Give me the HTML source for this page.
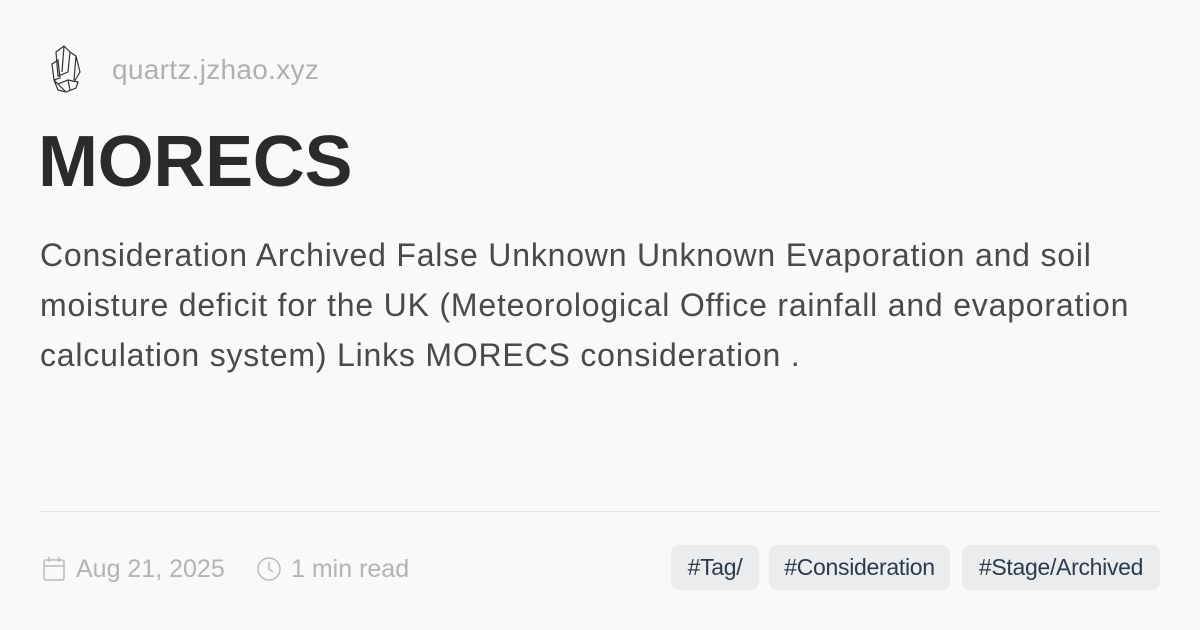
<!DOCTYPE html>
<html><head><style>
body{margin:0;width:1200px;height:630px;background:#faf8f8;font-family:"Liberation Sans",sans-serif;position:relative;overflow:hidden}
.abs{position:absolute;white-space:nowrap}
.site{left:112px;top:54px;font-size:28px;color:#b0b0b0;letter-spacing:0.3px}
h1{position:absolute;left:38px;top:121px;margin:0;font-size:72px;font-weight:bold;color:#2b2b2b;letter-spacing:-0.3px}
.body{left:40px;font-size:32px;color:#4a4a4a;letter-spacing:0.8px}
.hr{left:40px;top:511px;width:1120px;height:1px;background:#e6e3e3}
.meta{top:555px;font-size:25px;color:#b3b3b3;letter-spacing:0px}
.tag{top:545px;height:45px;line-height:45px;background:#ebecee;border-radius:8px;font-size:23px;color:#2a3b4c;text-align:center;letter-spacing:-0.3px}
</style></head><body>
<svg class="abs" style="left:46px;top:42px" width="40" height="52" viewBox="0 0 40 52" fill="none" stroke="#333" stroke-width="1.2">
<path d="M10 10 L18 4 L24 10 L22 30 L12 34 Z M18 4 L16 30 M24 10 L30 14 L34 30 L28 40 M30 14 L28 38 M6 22 L12 18 L14 36 L8 38 Z M8 38 L12 48 L20 50 L30 46 L32 40 L22 38 L12 42 Z M12 42 L20 50 M22 38 L24 48"/>
</svg>
<div class="abs site">quartz.jzhao.xyz</div>
<h1>MORECS</h1>
<div class="abs body" style="top:237px">Consideration Archived False Unknown Unknown Evaporation and soil</div>
<div class="abs body" style="top:287px">moisture deficit for the UK (Meteorological Office rainfall and evaporation</div>
<div class="abs body" style="top:337px">calculation system) Links MORECS consideration .</div>
<div class="abs hr"></div>
<svg class="abs" style="left:42px;top:556px" width="24" height="26" viewBox="0 0 24 26" fill="none" stroke="#bbb" stroke-width="1.5"><rect x="2" y="4" width="20" height="20" rx="2"/><path d="M2 10H22M7 1V6M17 1V6"/></svg>
<div class="abs meta" style="left:76px">Aug 21, 2025</div>
<svg class="abs" style="left:256px;top:556px" width="26" height="26" viewBox="0 0 26 26" fill="none" stroke="#bbb" stroke-width="1.5"><circle cx="13" cy="13" r="11"/><path d="M13 6V13L17 16"/></svg>
<div class="abs meta" style="left:291px">1 min read</div>
<div class="abs tag" style="left:671px;width:88px">#Tag/</div>
<div class="abs tag" style="left:769px;width:181px">#Consideration</div>
<div class="abs tag" style="left:962px;width:198px">#Stage/Archived</div>
</body></html>
